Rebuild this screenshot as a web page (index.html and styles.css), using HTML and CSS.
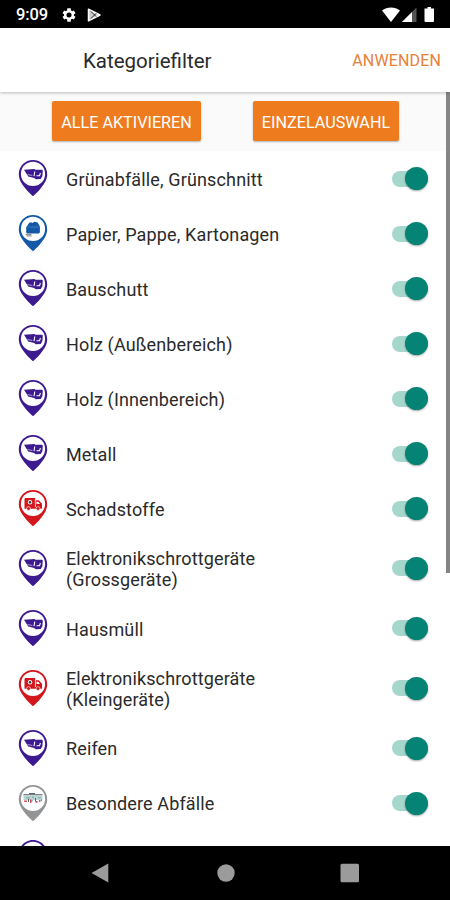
FILE: index.html
```
<!DOCTYPE html>
<html lang="de">
<head>
    <meta charset="UTF-8">
    <meta name="viewport" content="width=device-width, initial-scale=1.0">
    <title>Kategoriefilter</title>
    <link rel="stylesheet" href="styles.css">
</head>
<body>
    <!-- Icons -->
    <svg class="sprite" width="0" height="0">
        <symbol id="pin" viewBox="0 0 30 38">
            <path fill="currentColor" d="M15 1C7 1 .8 7.2.8 15.2c0 5.600 3.200 10.200 7 14.800 2.600 3.100 5 5.200 7.200 7.200 2.200-2 4.600-4.100 7.200-7.200 3.800-4.600 7-9.200 7-14.800C29.200 7.200 23 1 15 1z"/>
            <circle cx="15" cy="14.900" r="12.100" fill="#fff"/>
        </symbol>
        <symbol id="container" viewBox="0 0 30 38">
            <use href="#pin"/>
            <path fill="currentColor" d="M6 10.800l10.500-.8.900.8h6.600l.8.8-.4 5.500-1.600 2.800-5 .3-1.600-1.200-6-1.600-1.700-2.600z"/>
            <path stroke="#d9d0ee" stroke-width=".7" fill="none" d="M9.500 15.500l4.800 1"/>
            <path stroke="#fff" stroke-width="1.100" fill="none" d="M16.800 12.500l-.8 4.700M18.500 16.800h3l.9-2.800"/>
        </symbol>
        <symbol id="paper" viewBox="0 0 30 38">
            <use href="#pin"/>
            <path fill="currentColor" d="M9 12.200l2.200-3.400 2-.5 1 .8 2.200-1.300 3.300.8 2.200 4.200v5.800l-1.200 1H9.200l-1-1V13z"/>
            <path stroke="#5d93c6" stroke-width=".6" fill="none" d="M9.300 13h11"/>
            <path stroke="#8a9296" stroke-width="1.200" fill="none" d="M7.500 20.400h6M8.500 21.800h5"/>
        </symbol>
        <symbol id="truck" viewBox="0 0 30 38">
            <use href="#pin"/>
            <path fill="currentColor" d="M7.200 9h10v2.200h3.600l3.200 3.600v5H6.500V10z"/>
            <path fill="#fff" d="M18.500 12.700h1.800l1.700 2.300h-3.500z"/>
            <path stroke="#fff" stroke-width=".8" d="M17.400 10.500v7.500"/>
            <circle cx="12" cy="13.300" r="2.200" fill="#fff"/>
            <circle cx="12" cy="13.300" r="1.200" fill="#333"/>
            <circle cx="10.500" cy="19.500" r="1.900" fill="currentColor" stroke="#fff" stroke-width=".6"/>
            <circle cx="20" cy="19.500" r="1.900" fill="currentColor" stroke="#fff" stroke-width=".6"/>
        </symbol>
        <symbol id="depot" viewBox="0 0 30 38">
            <use href="#pin"/>
            <path fill="#c3cfd1" d="M5.500 10.500h19v5.500h-19z"/>
            <path fill="#56656b" d="M11 9h6v1h-6zM5.500 10.300h19v.6h-19zM10 14.500h1v3.500h-1zM17 14h1v3.500h-1z"/>
            <path fill="#7cc4bd" d="M8 13h4v1.500H8zM14 12.400h2v1.800h-2zM20 13h3v1.500h-3zM13 16h2v1.500h-2z"/>
            <path fill="#d0505b" d="M6 16.600h3V18H6zM12 15.500h1.500V19H12zM17.500 17h2v1.800h-2z"/>
            <path fill="#778" d="M21 16h1.500v2H21zM23 15.500h1V17h-1z"/>
        </symbol>
    </svg>

    <div class="screen">
        <div class="status-bar">
            <span class="time">9:09</span>
            <svg class="icon-gear" width="16" height="16" viewBox="0 0 24 24">
                <path fill="#fff" fill-rule="evenodd" d="M19.400 13a7.500 7.500 0 0 0 0-2l2.300-1.700-2.400-4.200-2.700 1.100a7.500 7.500 0 0 0-1.700-1L14.500 2h-5l-.4 3.200a7.500 7.500 0 0 0-1.700 1L4.700 5.100 2.300 9.300 4.600 11a7.500 7.500 0 0 0 0 2l-2.300 1.700 2.400 4.200 2.700-1.100a7.500 7.500 0 0 0 1.700 1l.4 3.200h5l.4-3.200a7.500 7.500 0 0 0 1.700-1l2.700 1.100 2.400-4.200zM12 15.800a3.800 3.800 0 1 1 0-7.600 3.800 3.800 0 0 1 0 7.600z"/>
            </svg>
            <svg class="icon-play" width="15" height="14" viewBox="0 0 15 14">
                <path fill="#ccc" stroke="#fff" stroke-width="1.500" stroke-linejoin="round" d="M1.500 1.200L13 7l-11.500 5.800z"/>
                <path stroke="#222" stroke-width=".9" fill="none" d="M3.500 3.200l6 5.600M3.500 10.800l6-5.600"/>
            </svg>
            <svg class="icon-system" width="55" height="18" viewBox="0 0 55 18">
                <path fill="#fff" d="M0 4.500C5 .4 13 .4 18 4.500L9 16z"/>
                <path fill="#555" d="M34.500 1.500V16H20z"/>
                <path fill="#fff" d="M30 6V16H20z"/>
                <path fill="#fff" d="M45.500 1h3.500v1.500h3V15q0 1-1 1h-7.500q-1 0-1-1V2.500h3z"/>
            </svg>
        </div>

        <div class="header">
            <h1>Kategoriefilter</h1>
            <a class="apply">ANWENDEN</a>
        </div>

        <div class="content">
            <div class="actions">
                <button class="btn btn-all">ALLE AKTIVIEREN</button>
                <button class="btn btn-single">EINZELAUSWAHL</button>
            </div>

            <ul class="list">
                <li><svg class="marker purple"><use href="#container"/></svg><span class="label">Grünabfälle, Grünschnitt</span><span class="switch"></span></li>
                <li><svg class="marker blue"><use href="#paper"/></svg><span class="label">Papier, Pappe, Kartonagen</span><span class="switch"></span></li>
                <li><svg class="marker purple"><use href="#container"/></svg><span class="label">Bauschutt</span><span class="switch"></span></li>
                <li><svg class="marker purple"><use href="#container"/></svg><span class="label">Holz (Außenbereich)</span><span class="switch"></span></li>
                <li><svg class="marker purple"><use href="#container"/></svg><span class="label">Holz (Innenbereich)</span><span class="switch"></span></li>
                <li><svg class="marker purple"><use href="#container"/></svg><span class="label">Metall</span><span class="switch"></span></li>
                <li><svg class="marker red"><use href="#truck"/></svg><span class="label">Schadstoffe</span><span class="switch"></span></li>
                <li class="tall"><svg class="marker purple"><use href="#container"/></svg><span class="label">Elektronikschrottgeräte<br>(Grossgeräte)</span><span class="switch"></span></li>
                <li><svg class="marker purple"><use href="#container"/></svg><span class="label">Hausmüll</span><span class="switch"></span></li>
                <li class="tall"><svg class="marker red"><use href="#truck"/></svg><span class="label">Elektronikschrottgeräte<br>(Kleingeräte)</span><span class="switch"></span></li>
                <li><svg class="marker purple"><use href="#container"/></svg><span class="label">Reifen</span><span class="switch"></span></li>
                <li><svg class="marker gray"><use href="#depot"/></svg><span class="label">Besondere Abfälle</span><span class="switch"></span></li>
                <li><svg class="marker purple"><use href="#container"/></svg></li>
            </ul>
            <div class="scrollbar"></div>
        </div>

        <div class="nav-bar">
            <svg width="20" height="22" viewBox="0 0 20 22"><path fill="#9b9b9b" d="M17.300 1.500v19L.5 11z"/></svg>
            <svg width="20" height="22" viewBox="0 0 20 22"><circle cx="10" cy="11" r="8.700" fill="#9b9b9b"/></svg>
            <svg width="20" height="22" viewBox="0 0 20 22"><rect x=".5" y="1.700" width="18.500" height="18.500" rx="1.500" fill="#9b9b9b"/></svg>
        </div>
    </div>
</body>
</html>
```

FILE: styles.css
```
body {
    margin: 0;
    font-family: Roboto, "Liberation Sans", sans-serif;
    color: #2a2a2a;
    background-color: #fff;
}

.sprite {
    display: none;
}

.screen {
    display: flex;
    flex-direction: column;
    width: 450px;
    height: 900px;
    overflow: hidden;
}

/* Statusleiste */
.status-bar {
    display: flex;
    align-items: center;
    flex: none;
    height: 28px;
    box-sizing: border-box;
    padding: 1px 13px 0 16px;
    background-color: #000;
    color: #fff;
}

.time {
    width: 45px;
    font-size: 16.5px;
    font-weight: 500;
    letter-spacing: -0.1px;
}

.icon-play {
    margin-left: 10px;
}

.icon-system {
    margin-left: auto;
}

/* Kopfzeile */
.header {
    display: flex;
    align-items: center;
    justify-content: space-between;
    flex: none;
    height: 64px;
    box-sizing: border-box;
    padding: 1px 9px 0 83px;
    background-color: #fff;
    box-shadow: 0 1px 3px rgba(0, 0, 0, 0.25);
    z-index: 1;
}

h1 {
    margin: 0;
    font-size: 20.5px;
    font-weight: 400;
}

.apply {
    color: #e8803a;
    font-size: 16px;
    letter-spacing: 0.15px;
}

.content {
    position: relative;
    flex: 1;
    overflow: hidden;
}

.actions {
    display: flex;
    gap: 52px;
    height: 59px;
    box-sizing: border-box;
    padding: 9px 0 0 52px;
    background-color: #fafafa;
}

.btn {
    height: 40px;
    padding: 2px 0 0;
    border: none;
    border-radius: 2px;
    background-color: #ee7c1f;
    box-shadow: 0 1px 2px rgba(0, 0, 0, 0.3);
    color: #fff;
    font-family: inherit;
    font-size: 16.2px;
    font-weight: 400;
    white-space: nowrap;
}

.btn-all {
    width: 149px;
}

.btn-single {
    width: 146px;
}

/* Kategorien */
.list {
    margin: 0;
    padding: 0;
    list-style: none;
}

.list li {
    display: flex;
    align-items: center;
    height: 55px;
    box-sizing: border-box;
    padding: 0 22px 0 18px;
}

.list li.tall {
    height: 64.8px;
}

.marker {
    flex: none;
    width: 30px;
    height: 38px;
    margin-right: 18px;
    margin-bottom: 1px;
}

.label {
    flex: 1;
    padding-top: 2px;
    font-size: 18px;
    line-height: 21.5px;
    letter-spacing: 0.14px;
}

.purple {
    color: #3d1a8f;
}

.blue {
    color: #1459a8;
}

.red {
    color: #d3161c;
}

.gray {
    color: #929495;
}

.switch {
    display: flex;
    align-items: center;
    justify-content: flex-end;
    width: 36px;
    height: 16px;
    border-radius: 8px;
    background-color: #a6d7cd;
}

.switch::after {
    content: "";
    width: 23px;
    height: 23px;
    flex: none;
    border-radius: 50%;
    background-color: #058374;
    box-shadow: 0 1px 2px rgba(0, 0, 0, 0.35);
}

.scrollbar {
    position: absolute;
    top: 0;
    right: 0;
    width: 4px;
    height: 481px;
    background-color: #858585;
}

/* Navigationsleiste */
.nav-bar {
    display: flex;
    align-items: center;
    justify-content: space-between;
    flex: none;
    height: 54px;
    box-sizing: border-box;
    padding: 0 90px 0 91px;
    background-color: #000;
}
```
